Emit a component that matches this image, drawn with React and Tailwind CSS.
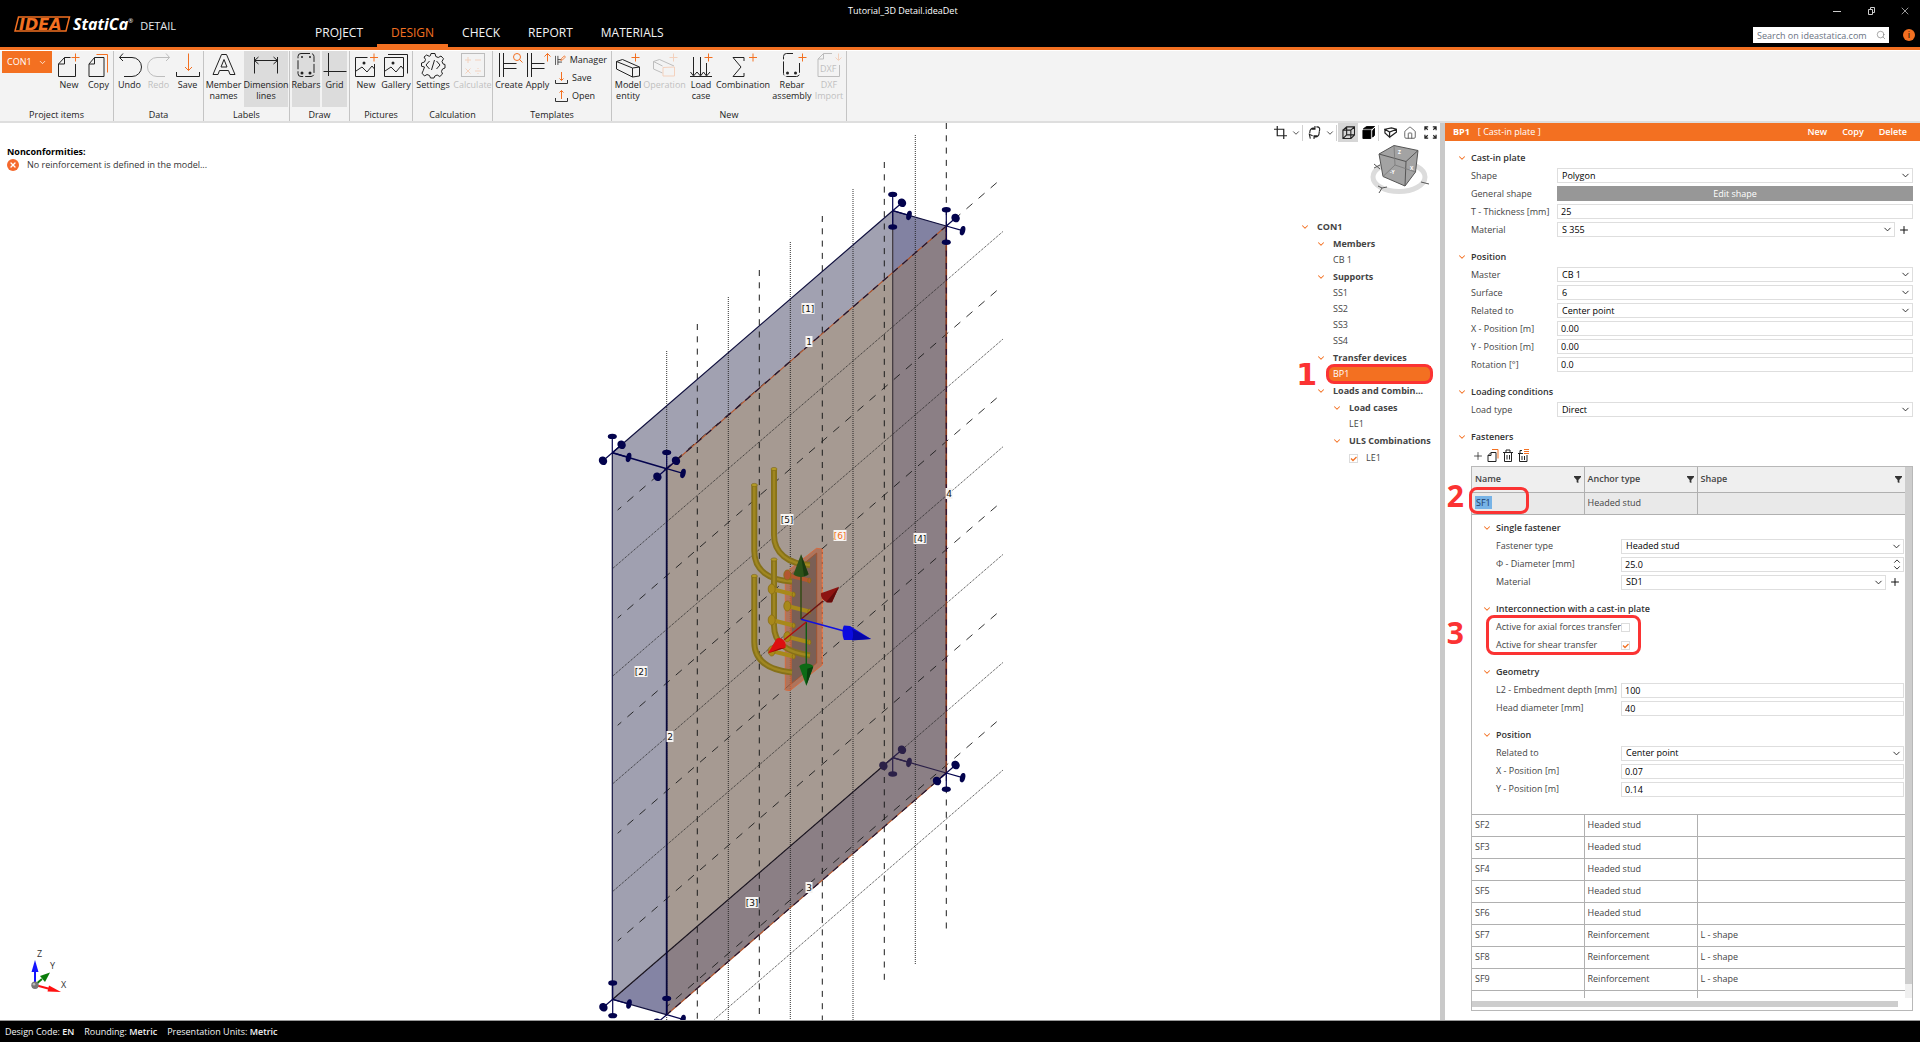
import { ChevronDown, House, Search, Plus, X } from "lucide-react";

const tabs = ["PROJECT", "DESIGN", "CHECK", "REPORT", "MATERIALS"];

/* ---------- ribbon icons ---------- */

const O = "#f37021";

const icons = {
  new: (
    <>
      <path d="M13.5 4.5H7.5L1.5 11v12.5h17V11M7.5 4.5V11h-6" />
      <path stroke={O} d="M18.5 .5v8M14.5 4.5h8" />
    </>
  ),
  copy: (
    <>
      <path d="M7.5 4.5h9.5v19h-15V11l5.5-6.5V11h-5.5" />
      <path stroke={O} d="M9.5 1.5h11v18" />
    </>
  ),
  undo: <path d="M5 .5L1.5 4.5 5 8M1.5 4.5H14a9.5 9.5 0 0 1 0 19H6" />,
  redo: <path d="M19 .5l3.5 4L19 8M22.5 4.5H10a9.5 9.5 0 0 0 0 19h8" />,
  save: (
    <>
      <path stroke={O} d="M12.5 .5v17M9 14l3.5 3.5L16 14" />
      <path d="M.5 19v4.5h23V19" />
    </>
  ),
  member: (
    <>
      <path d="M9.5 1.5h5L23 21.5h-5l-1.5-4h-9l-1.5 4H1z" />
      <path d="M12 6.5L9 14h6z" />
    </>
  ),
  dimension: <path d="M.5 4v16.500M23.500 4v16.500M.5 7.500h23M4.500 4l-4 3.500 4 3.500M19.500 4l4 3.500-4 3.500" />,
  rebars: (
    <>
      <rect x="4" y=".5" width="16" height="23" rx="3" strokeDasharray="9 2" />
      <g fill="currentColor" stroke="none">
        <circle cx="8" cy="4" r="1" />
        <circle cx="16" cy="4" r="1" />
        <circle cx="8" cy="20" r="1.5" />
        <circle cx="16" cy="20" r="1.5" />
      </g>
    </>
  ),
  grid: <path d="M5.5 0v23M.5 18.5h23" />,
  picture: (
    <>
      <path d="M13.5 4.5h-12v19h19V11M2 18l6-4 5 5 5-6 2.5 3" />
      <circle cx="10" cy="10" r="1.5" fill="currentColor" stroke="none" />
      <path stroke={O} d="M20 .5v8M16 4.5h8" />
    </>
  ),
  gallery: (
    <>
      <path d="M.5 4.5h19v19H.5zM1 18l6-4 5 5 5-6 2.5 3M4 1.5h19.5v19" />
      <circle cx="9" cy="10" r="1.5" fill="currentColor" stroke="none" />
    </>
  ),
  settings: (
    <>
      <path d="M10 .5h4l.8 3 2.4 1 2.8-1.5 2.5 2.700-1.5 2.800 1 2.400 2 .6v3.500l-2.500 1-1 2.400 1 2.600-2.700 2.500-2.600-1.500-2.400 1-.8 2h-3.500l-1-2.500-2.500-1-2.500 1.500-2.500-2.800 1.200-2.500L3.500 14l-3-.8V10l3-1L4.500 6.500 3 4l2.600-2 2.700 1.300 1-.5z" />
      <path d="M8.5 8l-3.5 4 3.5 4M15.5 8l3.5 4-3.5 4M13.500 7l-3 10" />
    </>
  ),
  calculate: (
    <>
      <rect x=".5" y=".5" width="23" height="23" />
      <path stroke={O} d="M7 4v6M4 7h6M14 7h6M4.5 15.5l5 5M9.5 15.5l-5 5M14 18h6M17 15v1M17 20v1" />
    </>
  ),
  create: (
    <>
      <path d="M2.5 0v24M6.5 0v24M6.5 10.5h13M6.5 15.5h13" />
      <circle cx="20" cy="4" r="3.5" stroke={O} />
      <path stroke={O} d="M22.5 6.5l3 3" />
    </>
  ),
  apply: (
    <>
      <path d="M1.5 0v24M5.5 0v24M5.5 10.5h13M5.5 15.5h13" />
      <path stroke={O} d="M21.5 8.5V.5M18.5 3.5l3-3 3 3" />
    </>
  ),
  model: (
    <>
      <path d="M.5 8.5l6-2 17 7.500v9l-7 1L.5 16zM.5 8.500L16.500 15l7-1M16.500 15v9" />
      <path stroke={O} d="M19.5 .5v8M15.5 4.5h8" />
    </>
  ),
  operation: (
    <>
      <path d="M9.5 20L.5 16V8.500l6-2 14.500 6.500M.5 8.500L9.500 13" />
      <path stroke={O} d="M10 14.5l11.500-.5v9H10zM20.500 .5v8M16.500 4.500h8" />
    </>
  ),
  load: (
    <>
      <path d="M4.5 4v18M11.5 4v18M17.5 10v12M1.5 19l3 4 3.500-4 3.500 4 3-4 3 4 3.500-4M1 23.500h22" />
      <path stroke={O} d="M19.5 .5v8M15.5 4.5h8" />
    </>
  ),
  combination: (
    <>
      <path d="M13 8V4.5H2l8 9.500-8 9.500h11V20" />
      <path stroke={O} d="M22 .5v8M18 4.5h8" />
    </>
  ),
  assembly: (
    <>
      <path d="M13 .5H6.5a3 3 0 0 0-3 3v17a3 3 0 0 0 3 3h10a3 3 0 0 0 3-3V10" strokeDasharray="14 2" />
      <circle cx="7.5" cy="20" r="1.5" fill="currentColor" stroke="none" />
      <circle cx="15.5" cy="20" r="1.5" fill="currentColor" stroke="none" />
      <path stroke={O} d="M22.5 .5v8M18.5 4.5h8" />
    </>
  ),
  dxf: (
    <>
      <path d="M15 .5H6.5L1 6v17.5h21.5V12M6.5 .5V6H1" />
      <path stroke={O} d="M21.5 .5V7M18.5 4.5l3 3 3-3" />
      <text x="3" y="19" fontSize="9" fill="currentColor" stroke="none" fontFamily="Open Sans, sans-serif">DXF</text>
    </>
  ),
};

const Icon = ({ name }) => (
  <svg
    viewBox="0 0 24 24"
    className="w-6 h-6 overflow-visible shrink-0"
    fill="none"
    stroke="currentColor"
    strokeWidth="1"
  >
    {icons[name]}
  </svg>
);

const Tool = ({ icon, label, className, active, disabled }) => (
  <button
    disabled={disabled}
    className={`h-[56px] pt-[2px] flex flex-col items-center gap-[2px] text-center leading-[11px] ${className} ${
      active ? "bg-[#dcdcdc]" : ""
    } ${disabled ? "opacity-25" : ""}`}
  >
    <Icon name={icon} />
    <span className="whitespace-pre">{label}</span>
  </button>
);

const Group = ({ title, className, children }) => (
  <section className="flex flex-col justify-between border-r border-[#c4c4c4]">
    <div className={`flex ${className}`}>{children}</div>
    <h2 className="text-center leading-[13px]">{title}</h2>
  </section>
);

const SmallTool = ({ label, children }) => (
  <button className="flex items-center gap-[4px] h-[18px]">
    <svg viewBox="0 0 13 12" className="w-[13px] h-3" fill="none" stroke="#333">
      {children}
    </svg>
    {label}
  </button>
);

const Ribbon = () => (
  <div className="h-[73px] shrink-0 flex bg-[#f3f3f3] border-t border-t-white border-b-2 border-b-[#dedede] text-[#222]">
    <Group title="Project items" className="pl-[2px]">
      <button className="w-[50px] h-[22px] mr-[2px] px-[5px] flex items-center justify-between bg-[#f37021] text-white">
        CON1 <ChevronDown size={9} strokeWidth={2} />
      </button>
      <Tool icon="new" label="New" className="w-[30px]" />
      <Tool icon="copy" label="Copy" className="w-[29px]" />
    </Group>
    <Group title="Data" className="px-px">
      <Tool icon="undo" label="Undo" className="w-[29px]" />
      <Tool icon="redo" label="Redo" className="w-[29px]" disabled />
      <Tool icon="save" label="Save" className="w-[29px]" />
    </Group>
    <Group title="Labels" className="px-px gap-[2px]">
      <Tool icon="member" label={"Member\nnames"} className="w-[37px]" />
      <Tool icon="dimension" label={"Dimension\nlines"} className="w-[44px]" active />
    </Group>
    <Group title="Draw" className="px-[2px] gap-[2px]">
      <Tool icon="rebars" label="Rebars" className="w-[28px]" active />
      <Tool icon="grid" label="Grid" className="w-[25px]" active />
    </Group>
    <Group title="Pictures" className="px-px">
      <Tool icon="picture" label="New" className="w-[30px]" />
      <Tool icon="gallery" label="Gallery" className="w-[30px]" />
    </Group>
    <Group title="Calculation" className="px-px gap-[2px]">
      <Tool icon="settings" label="Settings" className="w-[38px]" />
      <Tool icon="calculate" label="Calculate" className="w-[37px]" disabled />
    </Group>
    <Group title="Templates" className="pl-px pr-[4px]">
      <Tool icon="create" label="Create" className="w-[30px]" />
      <Tool icon="apply" label="Apply" className="w-[27px]" />
      <div className="flex flex-col w-[56px] pl-[4px]">
        <SmallTool label="Manager">
          <path d="M.5 1v11M3.5 1v11M3.5 5.5h4M3.5 8.5h5" />
          <path stroke={O} d="M7 6.5L8 4l3.500-3 1 1.500L9 6z" />
        </SmallTool>
        <SmallTool label="Save">
          <path stroke={O} d="M6.5 0v8.500M4.500 6.500l2 2 2-2" />
          <path d="M.5 8v3.500h12V8" />
        </SmallTool>
        <SmallTool label="Open">
          <path stroke={O} d="M6.5 9V.5M4.500 2.500l2-2 2 2" />
          <path d="M.5 8v3.500h12V8" />
        </SmallTool>
      </div>
    </Group>
    <Group title="New" className="pl-px pr-[2px]">
      <Tool icon="model" label={"Model\nentity"} className="w-[30px]" />
      <Tool icon="operation" label="Operation" className="w-[43px]" disabled />
      <Tool icon="load" label={"Load\ncase"} className="w-[30px]" />
      <Tool icon="combination" label="Combination" className="w-[54px]" />
      <Tool icon="assembly" label={"Rebar\nassembly"} className="w-[44px]" />
      <Tool icon="dxf" label={"DXF\nImport"} className="w-[30px]" disabled />
    </Group>
  </div>
);

/* ---------- header ---------- */

const Header = () => (
  <header className="h-[50px] shrink-0 grid grid-cols-[1fr_auto_1fr] bg-black border-b-[3px] border-[#f37021] text-white">
    <div className="flex">
      <div className="w-[301px] shrink-0 pl-[14px] flex items-center">
        <svg viewBox="0 0 57 16" className="w-[57px] h-4">
          <path d="M4.5 1h51l-3.5 14H1z" fill="none" stroke={O} strokeWidth="1.5" />
          <text
            x="5"
            y="13.5"
            fill={O}
            fontFamily="DejaVu Sans, sans-serif"
            fontWeight="bold"
            fontStyle="italic"
            fontSize="16"
          >
            IDEA
          </text>
        </svg>
        <span className="text-[16px] leading-5 font-bold italic ml-[2px]">StatiCa</span>
        <sup className="text-[6px]">®</sup>
        <span className="text-[11px] ml-[7px] mt-[4px] text-gray-200">DETAIL</span>
      </div>
      <nav className="flex items-end text-[12px]">
        {tabs.map((tab) => (
          <a
            key={tab}
            href="#"
            className={`px-[14px] h-[23px] leading-[18px] border-b-[3px] ${
              tab === "DESIGN" ? "text-[#f37021] border-[#f37021]" : "text-gray-100 border-transparent"
            }`}
          >
            {tab}
          </a>
        ))}
      </nav>
    </div>
    <h1 className="pt-1 leading-[13px] -ml-[112px]">Tutorial_3D Detail.ideaDet</h1>
    <div className="flex flex-col items-end justify-between pb-1">
      <div className="flex gap-[22px] pt-[5px] pr-[9px]">
        <button aria-label="Minimize">
          <svg viewBox="0 0 12 12" className="w-3 h-3" stroke="#ccc">
            <path d="M2 6.5h8" />
          </svg>
        </button>
        <button aria-label="Restore">
          <svg viewBox="0 0 12 12" className="w-3 h-3" stroke="#ccc" fill="none">
            <path d="M3.5 4.5h4v5h-4zM5.5 4V2.500h4v5H8" />
          </svg>
        </button>
        <button aria-label="Close">
          <X size={12} strokeWidth={1.5} color="#ccc" />
        </button>
      </div>
      <div className="flex items-center gap-[14px] pr-[5px]">
        <div className="relative w-[136px]">
          <input
            aria-label="Search"
            placeholder="Search on ideastatica.com"
            className="w-full h-4 px-1 bg-white text-[9px] text-black placeholder:text-gray-500 block"
          />
          <Search size={10} strokeWidth={1.5} color="#777" className="absolute right-[3px] top-[3px]" />
        </div>
        <button className="w-3 h-3 rounded-full bg-[#f37021] text-black text-[9px] leading-3">i</button>
      </div>
    </div>
  </header>
);

/* ---------- 3D scene ---------- */

// [x, top, bottom] of vertical grid lines
const dashedV = [
  [697.3, 324, 1020],
  [759.3, 270, 1020],
  [822.3, 216, 1020],
  [884.3, 162, 985],
  [946.3, 123, 932],
];
const dottedV = [
  [666.7, 351, 1020],
  [728.3, 297, 1020],
  [790.3, 242, 1020],
  [853, 189, 1020],
  [915.3, 135, 964],
];
const dashedD = [182.7, 290.7, 398, 506, 613.7];
const dottedD = [231.7, 339.3, 447, 554.7, 662.7];

const labels = [
  ["[1]", 808, 309],
  ["1", 809, 342],
  ["[5]", 787, 520],
  ["[6]", 840, 536],
  ["[4]", 920, 539],
  ["4", 949, 494],
  ["[2]", 641, 672],
  ["2", 670, 737],
  ["[3]", 752, 903],
  ["3", 809, 888],
];

// which arms each corner support has: u(p) d(own) n(orth-east) s(outh-west) r(ight)
const supports = [
  [612.3, 452.7, "unsr"],
  [666.7, 468.7, "unsr"],
  [892.7, 210.7, "udnr"],
  [946.3, 226, "udnr"],
  [612.7, 999.3, "udsr"],
  [666.7, 1014.7, "usr"],
  [892.7, 757.7, "dnsr", "#2b2048"],
  [946.3, 773, "dnsr"],
];

const arms = {
  u: [0, -16.3, 4.5, 2.7, 0],
  d: [0, 16.3, 4.5, 2.7, 0],
  n: [9.3, -8, 4, 4.5, -40],
  s: [-9.3, 8, 4, 4.5, -40],
  r: [16.3, 4.7, 2.6, 4.8, 14],
};

const Support = ({ x, y, dirs, color = "#03034d" }) => (
  <g transform={`translate(${x} ${y})`} fill={color} stroke={color}>
    {dirs.split("").map((d) => {
      const [dx, dy, rx, ry, rot] = arms[d];
      return (
        <g key={d}>
          <path d={`M0 0L${dx} ${dy}`} strokeWidth="1.2" />
          <ellipse cx={dx} cy={dy} rx={rx} ry={ry} stroke="none" transform={`rotate(${rot} ${dx} ${dy})`} />
        </g>
      );
    })}
  </g>
);

const Tube = ({ d }) => (
  <g fill="none">
    <path d={d} stroke="#86711a" strokeWidth="6" />
    <path d={d} stroke="#a08720" strokeWidth="2.5" />
  </g>
);

const Stud = ({ x, y, color = "#a8891a" }) => (
  <g stroke={color} fill={color}>
    <path d={`M${x} ${y}l22 5.500`} strokeWidth="4" />
    <ellipse cx={x} cy={y} rx="3.5" ry="5" stroke="#8a6d12" strokeWidth=".8" />
    <ellipse cx={x + 22} cy={y + 5.5} rx="1.5" ry="2.5" stroke="#8a6d12" strokeWidth=".8" />
  </g>
);

const Scene = () => (
  <svg
    viewBox="0 123 1440 897"
    preserveAspectRatio="xMidYMid slice"
    className="absolute inset-0 w-full h-full"
    fontFamily="DejaVu Sans, sans-serif"
  >
    {/* wall faces */}
    <path d="M612.3 452.7L892.7 210.7 946.3 226 666.7 468.7z" fill="#a1a1b1" />
    <path d="M892.7 210.7L946.3 226 892.7 272.7z" fill="#8282a2" />
    <path d="M612.3 452.7l54.400 16v546l-54-15.400z" fill="#a0a0b0" />
    <path d="M612.7 999.3l54-46.600v62z" fill="#8484a4" />
    <path d="M666.7 468.7L946.3 226v547L666.7 1014.7z" fill="#a69a92" />
    <path d="M892.7 272.7L946.3 226v547L666.7 1014.7v-62l226-195z" fill="#8b7f85" />

    {/* grid */}
    <g stroke="#1c1c1c" fill="none">
      {dashedV.map(([x, a, b]) => (
        <path key={x} d={`M${x} ${a}V${b}`} strokeDasharray="6 6.3" strokeWidth="1" />
      ))}
      {dottedV.map(([x, a, b]) => (
        <path key={x} d={`M${x} ${a}V${b}`} strokeDasharray="1 1" strokeWidth=".9" />
      ))}
      {dashedD.map((y) => (
        <path key={y} d={`M996.7 ${y}l-379 327.3`} strokeDasharray="8 8" strokeWidth=".9" />
      ))}
      <path d="M996.7 721.7L666.7 1006.7" strokeDasharray="8 8" strokeWidth=".9" />
      {dottedD.map((y) => (
        <path key={y} d={`M1002.7 ${y}l-390.4 337.1`} strokeDasharray="1 1" strokeWidth=".9" />
      ))}
      <path d="M1002.7 770.3l-289 249.7" strokeDasharray="1 1" strokeWidth=".9" />
    </g>

    {/* edges */}
    <g fill="none" strokeWidth="1.2">
      <path d="M612.3 452.7L892.7 210.7l53.600 15.300M612.3 452.7v546.600l54 15.400" stroke="#11113f" />
      <path d="M612.7 999.3L892.7 757.7" stroke="#1d1722" />
      <path d="M892.7 210.7v547" stroke="#3d363b" />
      <path d="M892.7 757.7l53.6 15.3" stroke="#2b2048" />
      <path d="M666.7 468.7v546" stroke="#07073a" strokeWidth="1.8" />
      <path d="M666.7 468.7L946.3 226M946.3 773L666.7 1014.7" stroke="#b3572f" />
      <path d="M666.7 468.7L946.3 226M946.3 773L666.7 1014.7" stroke="#1a1433" strokeDasharray="7 6" />
      <path d="M946.3 226v547" stroke="#8c3c20" strokeWidth="1.6" />
      <path d="M946.3 226v547" stroke="#2a1030" strokeDasharray="6 6.3" />
      <path d="M612.3 452.7l54.400 16" stroke="#03034d" strokeWidth="1.6" />
    </g>

    {supports.map(([x, y, dirs, color]) => (
      <Support key={`${x}${y}`} x={x} y={y} dirs={dirs} color={color} />
    ))}

    {/* cast-in plate */}
    <g stroke="#d9683a" strokeWidth=".9">
      <path d="M785.3 572.7l31.300-24.400 5.700.7v116l-32.300 25.600-4.700-.6z" fill="#b0674a" fillOpacity=".75" />
      <path d="M791 574l25.7-21v110L791 684z" fill="#7a5f55" stroke="#a3522f" />
      <path d="M785.3 572.7l5.7 1.300v115.500" fill="none" />
    </g>
    <path d="M822.3 549v116" stroke="#f0804e" strokeDasharray="3 2" />

    {/* anchors */}
    <Tube d="M774 469v66c0 18 14 29 36 30" />
    <Tube d="M754.3 485v66c0 19 14 29 37.700 30.500" />
    <Tube d="M774 559.5v66c0 19 14 27 36 30" />
    <Tube d="M754.3 576v66c0 19 14 28 37.700 30.500" />
    <g fill="#b39a26" stroke="#7b6514" strokeWidth=".6">
      <ellipse cx="774" cy="469" rx="3" ry="1.6" />
      <ellipse cx="754.3" cy="485" rx="3" ry="1.6" />
      <ellipse cx="774" cy="559.5" rx="3" ry="1.6" />
      <ellipse cx="754.3" cy="576" rx="3" ry="1.6" />
    </g>
    <Stud x={787.3} y={575} color="#b3572f" />
    <Stud x={771.7} y={589} />
    <Stud x={787.3} y={606} />
    <Stud x={771.7} y={620} />
    <Stud x={787.3} y={636.7} />
    <Stud x={771.7} y={651} />

    {/* local axes */}
    <g fill="none" strokeWidth="1.4">
      <path d="M801 619.3V574" stroke="#2f4a12" />
      <path d="M806.3 622v46" stroke="#0c5c14" />
      <path d="M806.3 622L784 640" stroke="#b00d0d" />
      <path d="M801 619.3l22-18.300" stroke="#6e1210" />
      <path d="M801 619.3l44 12" stroke="#1010e0" />
    </g>
    <path d="M801 554.3l7.500 20c-3 3.500-12 3.500-15 0z" fill="#2d5219" />
    <path d="M801 554.3l3 22 4.500-2z" fill="#1b3b10" />
    <path d="M806.3 685.7l-7-19.500c3-3.500 11-3.500 14 0z" fill="#0d6a15" />
    <path d="M806.3 685.7l1-17 6-2z" fill="#07400c" />
    <path d="M768 653.3l8.500-14.500c4-3 10.500 2 9 9z" fill="#dd0f0f" />
    <path d="M768 653.3l12-5 5.500-.5z" fill="#8a0808" />
    <path d="M839 586.7l-18 6.500c-1 5 5 11 11 9z" fill="#8e1411" />
    <path d="M839 586.7l-13 15.500 6 0z" fill="#640b0a" />
    <path d="M871 639l-21-13-6-.5c-2 3-2 10 0 14.500h8z" fill="#0b0be0" />
    <path d="M871 639l-19-10c1.500 3 1.500 8 0 11.500z" fill="#0505a8" />

    {labels.map(([text, x, y]) => {
      const w = text.length > 1 ? 13 : 7;
      return (
        <g key={text}>
          <rect x={x - w / 2} y={y - 6} width={w} height="11" fill="#f6f4f2" />
          <text x={x} y={y + 3} textAnchor="middle" fontSize="9" fill={text === "[6]" ? O : "#111"}>
            {text}
          </text>
        </g>
      );
    })}

    {/* global axes */}
    <path d="M35 985v-17" stroke="#1414ff" strokeWidth="2" />
    <path d="M35 960l3.5 12h-7z" fill="#1414ff" />
    <path d="M35 985l7-6" stroke="#0a7d0a" strokeWidth="2" />
    <path d="M50 972.5l-10 3.500 5 6z" fill="#0a7d0a" />
    <path d="M35 985l15 4" stroke="#f11" strokeWidth="2" />
    <path d="M61 992l-13.5-.5 1.500-6z" fill="#f11" />
    <circle cx="35" cy="985.3" r="3.7" fill="#777" />
    <circle cx="34" cy="984.3" r="1.3" fill="#bbb" />
    <g fontSize="9" fill="#333" fontFamily="Open Sans, sans-serif" textAnchor="middle">
      <text x="39.5" y="957">Z</text>
      <text x="52.5" y="969">Y</text>
      <text x="63.5" y="988">X</text>
    </g>
  </svg>
);

const NavCube = () => (
  <svg viewBox="0 0 62 52" className="w-[62px] h-[52px]" fill="none">
    <ellipse cx="31" cy="33" rx="26" ry="14.5" stroke="#dcdcdc" strokeWidth="5" />
    <path d="M11 10L26 1.5 50 6.5 47.5 28 37 42 15 32.5z" fill="#a3a3a3" stroke="#555" />
    <path d="M11 10l27 7.5L50 6.5M38 17.5L37 42" stroke="#555" />
    <path d="M26 1.5l1 19.5L15 32.5M27 21l20.5 7" stroke="#777" strokeWidth=".8" />
    <path d="M6 20l6 5M6 24l6-3M10 42l4 2 5-1M14 44l-3 5M53 38l8 2" stroke="#555" />
    <g fontSize="5" fill="#fff" fontFamily="Open Sans, sans-serif" fontWeight="bold">
      <text x="22" y="30">-Y</text>
      <text x="30" y="10">Z</text>
      <text x="42" y="26">X</text>
    </g>
  </svg>
);

const ViewButton = ({ label, active, children }) => (
  <button aria-label={label} className={`w-5 h-[19px] flex items-center justify-center ${active ? "bg-[#d6d6d6]" : ""}`}>
    <svg viewBox="0 0 14 14" className="w-[13px] h-[13px]" fill="none" stroke="#222">
      {children}
    </svg>
  </button>
);

const Divider = () => <span className="w-px h-4 bg-[#d0d0d0] mr-[1px]" />;

const ViewToolbar = () => (
  <div className="flex items-center text-[#333]">
    <ViewButton label="Clip">
      <path d="M3.5 0v10.500H14M0 3.500h10.500V14" strokeWidth="1.3" />
    </ViewButton>
    <ChevronDown size={10} className="mx-[1px]" />
    <Divider />
    <ViewButton label="Rotate">
      <path
        d="M2 8C1.500 4 4 1.500 7 2.500M7.500 0v3.500H4M2.500 13.500L1.500 9 5 10.500M12 6c.5 4-2 6.500-5 5.500M6.500 14v-3.500H10M9 1c3-.5 4.500 1.500 3 5"
        strokeWidth="1.2"
      />
    </ViewButton>
    <ChevronDown size={10} className="mx-px" />
    <Divider />
    <ViewButton label="Wireframe" active>
      <path d="M1 4.5h8.500v9H1zM1 4.500L5 1h8.500L9.500 4.500M13.500 1v8.500l-4 4M5 1v8.500h8.500M5 9.500l-4 4" strokeWidth="1.2" />
    </ViewButton>
    <ViewButton label="Solid">
      <path d="M1 4.5h8.500v9H1z" fill="#000" stroke="#000" />
      <path d="M1.5 3L5 .5h8.500l-3 2.500zM11.500 5l2-2.500v7.500L11.500 12z" fill="#000" stroke="#000" />
    </ViewButton>
    <Divider />
    <ViewButton label="Section">
      <path d="M1 3.5L8 2l5.500 1.500-7.500 3zM1 3.500v4l5 4.500V6.500M13.500 3.500v3L6 12" strokeWidth="1.3" />
    </ViewButton>
    <button aria-label="Home" className="w-5 flex justify-center">
      <House size={14} strokeWidth={1.5} color="#555" />
    </button>
    <ViewButton label="Fit">
      <path
        d="M4.5 1H1v3.500M1 1l3 3M9.500 1H13v3.500M13 1l-3 3M4.500 13H1V9.500M1 13l3-3M9.500 13H13V9.500M13 13l-3-3"
        strokeWidth="1.3"
      />
    </ViewButton>
  </div>
);

/* ---------- shared controls ---------- */

const Tick = ({ label, id, defaultChecked }) => (
  <span className="relative w-[9px] h-[9px] shrink-0">
    <input
      id={id}
      type="checkbox"
      aria-label={label}
      defaultChecked={defaultChecked}
      className="peer appearance-none block w-[9px] h-[9px] bg-white border border-[#dcdcdc]"
    />
    <svg
      viewBox="0 0 9 9"
      className="absolute inset-0 w-[9px] h-[9px] hidden peer-checked:block pointer-events-none"
      fill="none"
      stroke={O}
      strokeWidth="1.3"
    >
      <path d="M2 4.5L4 6.5 7.5 3" />
    </svg>
  </span>
);

const Fold = () => <ChevronDown size={10} strokeWidth={2.5} color={O} className="shrink-0" />;

const Mark = ({ className, children }) => (
  <span className={`absolute right-full text-[30px] leading-[30px] font-bold text-[#fb3333] ${className}`}>
    {children}
  </span>
);

const indent = ["pl-0", "pl-4", "pl-8"];

const TreeHead = ({ level, children }) => (
  <li className={`h-[17px] flex items-center gap-[7px] font-bold whitespace-nowrap ${indent[level]}`}>
    <Fold />
    {children}
  </li>
);

const TreeItem = ({ level, children }) => (
  <li className={`h-4 flex items-center ${indent[level]}`}>
    <span className="pl-[17px]">{children}</span>
  </li>
);

const Tree = () => (
  <ul className="w-[131px] text-[#444]">
    <TreeHead level={0}>CON1</TreeHead>
    <TreeHead level={1}>Members</TreeHead>
    <TreeItem level={1}>CB 1</TreeItem>
    <TreeHead level={1}>Supports</TreeHead>
    {["SS1", "SS2", "SS3", "SS4"].map((s) => (
      <TreeItem key={s} level={1}>
        {s}
      </TreeItem>
    ))}
    <TreeHead level={1}>Transfer devices</TreeHead>
    <li className="relative h-4 ml-[29px] pl-1 flex items-center bg-[#f37021] text-white">
      BP1
      <span className="absolute -inset-y-[2px] -left-[3px] -right-[2px] border-[3px] border-[#fb3333] rounded-[8px]" />
      <Mark className="mr-3 top-[-6px] font-['DejaVu_Sans']">1</Mark>
    </li>
    <TreeHead level={1}>Loads and Combin...</TreeHead>
    <TreeHead level={2}>Load cases</TreeHead>
    <TreeItem level={2}>LE1</TreeItem>
    <TreeHead level={2}>ULS Combinations</TreeHead>
    <li className="h-[18px] flex items-center gap-[8px] pl-[49px]">
      <Tick id="uls-le1" defaultChecked />
      <label htmlFor="uls-le1">LE1</label>
    </li>
  </ul>
);

const Viewport = () => (
  <main className="relative flex-1 min-w-0 flex justify-between overflow-hidden bg-white">
    <Scene />
    <div className="relative pl-[7px] pt-[22px] text-[#333]">
      <h2 className="font-bold text-black leading-[13px]">Nonconformities:</h2>
      <p className="flex items-center gap-2 h-[14px]">
        <span className="w-3 h-3 rounded-full bg-[#f5692e] flex items-center justify-center">
          <X size={8} strokeWidth={4} color="#fff" />
        </span>
        No reinforcement is defined in the model...
      </p>
    </div>
    <div className="relative flex flex-col items-end">
      <ViewToolbar />
      <div className="pr-[10px] pt-[2px]">
        <NavCube />
      </div>
      <div className="pr-[9px] pt-[22px]">
        <Tree />
      </div>
    </div>
  </main>
);

/* ---------- properties panel ---------- */

const fieldBox = "w-full h-[15px] block bg-white border border-[#dedede] text-black";

const Row = ({ id, label, wide, children }) => (
  <div className="flex items-center h-[15px]">
    <label htmlFor={id} className={`shrink-0 whitespace-nowrap ${wide ? "w-[125px]" : "w-[86px]"}`}>
      {label}
    </label>
    {children}
  </div>
);

const Text = ({ id, label, value, wide }) => (
  <Row id={id} label={label} wide={wide}>
    <input id={id} defaultValue={value} className={`${fieldBox} px-[3px]`} />
  </Row>
);

const Select = ({ id, label, value, wide, addable }) => (
  <Row id={id} label={label} wide={wide}>
    <div className="relative flex-1">
      <select id={id} className={`${fieldBox} appearance-none px-1`}>
        <option>{value}</option>
      </select>
      <ChevronDown size={11} className="absolute right-[2px] top-[2px] pointer-events-none" color="#222" />
    </div>
    {addable && (
      <button aria-label="Add material" className="w-[18px] flex justify-center">
        <Plus size={12} color="#111" />
      </button>
    )}
  </Row>
);

const Section = ({ title, children }) => (
  <section className="mb-3 flex flex-col gap-[3px]">
    <h3 className="h-[15px] flex items-center gap-[4px] font-semibold text-[#333]">
      <Fold />
      {title}
    </h3>
    {children && <div className="pl-[14px] flex flex-col gap-[3px]">{children}</div>}
  </section>
);

const Funnel = () => (
  <svg viewBox="0 0 8 8" className="w-[7px] h-[7px] shrink-0">
    <path d="M0 0h8v1L5 4.5V8L3 7V4.5L0 1z" fill="#333" />
  </svg>
);

const fasteners = [
  ["SF2", "Headed stud", ""],
  ["SF3", "Headed stud", ""],
  ["SF4", "Headed stud", ""],
  ["SF5", "Headed stud", ""],
  ["SF6", "Headed stud", ""],
  ["SF7", "Reinforcement", "L - shape"],
  ["SF8", "Reinforcement", "L - shape"],
  ["SF9", "Reinforcement", "L - shape"],
  ["", "", ""],
];

const FastenerDetail = () => (
  <div className="pt-[6px] pl-[10px] pr-px pb-[5px]">
    <Section title="Single fastener">
      <Select id="f-type" label="Fastener type" value="Headed stud" wide />
      <Row id="f-dia" label="Φ - Diameter [mm]" wide>
        <div className="relative flex-1">
          <input id="f-dia" defaultValue="25.0" className={`${fieldBox} px-[3px]`} />
          <svg viewBox="0 0 8 12" className="absolute right-[3px] top-[2px] w-2 h-[11px]" fill="none" stroke="#222">
            <path d="M1 4l3-3 3 3M1 8l3 3 3-3" />
          </svg>
        </div>
      </Row>
      <Select id="f-mat" label="Material" value="SD1" wide addable />
    </Section>
    <Section title="Interconnection with a cast-in plate">
      <Row id="f-axial" label="Active for axial forces transfer" wide>
        <Tick id="f-axial" />
      </Row>
      <Row id="f-shear" label="Active for shear transfer" wide>
        <Tick id="f-shear" defaultChecked />
      </Row>
    </Section>
    <Section title="Geometry">
      <Text id="f-l2" label="L2 - Embedment depth [mm]" value="100" wide />
      <Text id="f-head" label="Head diameter [mm]" value="40" wide />
    </Section>
    <Section title="Position">
      <Select id="f-rel" label="Related to" value="Center point" wide />
      <Text id="f-x" label="X - Position [m]" value="0.07" wide />
      <Text id="f-y" label="Y - Position [m]" value="0.14" wide />
    </Section>
  </div>
);

const FastenerTable = () => (
  <div className="relative flex-1 min-h-0 ml-[14px] mb-[9px] flex flex-col border border-[#b8b8b8]">
    <div className="flex-1 min-h-0 flex">
      <div className="flex-1 overflow-hidden">
        <table className="w-full table-fixed border-collapse text-left">
          <colgroup>
            <col className="w-[112px]" />
            <col className="w-[113px]" />
            <col />
          </colgroup>
          <thead>
            <tr className="h-[25px] bg-[#efefef]">
              {["Name", "Anchor type", "Shape"].map((h) => (
                <th key={h} className="px-[3px] border-r border-b border-[#b0b0b0] last:border-r-0 font-semibold">
                  <div className="flex items-center justify-between pr-1 last:pr-0">
                    {h}
                    <Funnel />
                  </div>
                </th>
              ))}
            </tr>
          </thead>
          <tbody>
            <tr className="h-[22px] bg-[#e9e9e9]">
              <td className="px-[3px] border-r border-b border-[#b0b0b0]">
                <span className="bg-[#77b3e6] text-[#1b3a66] px-px">SF1</span>
              </td>
              <td className="px-[3px] border-r border-b border-[#b0b0b0]">Headed stud</td>
              <td className="border-b border-[#b0b0b0]"></td>
            </tr>
            <tr>
              <td colSpan={3} className="border-b border-[#b0b0b0]">
                <FastenerDetail />
              </td>
            </tr>
            {fasteners.map(([name, type, shape], i) => (
              <tr key={i} className="h-[22px]">
                <td className="px-[3px] border-r border-b border-[#b0b0b0]">{name}</td>
                <td className="px-[3px] border-r border-b border-[#b0b0b0]">{type}</td>
                <td className="px-[3px] border-b border-[#b0b0b0]">{shape}</td>
              </tr>
            ))}
          </tbody>
        </table>
      </div>
      <div className="w-[7px] bg-[#f0f0f0] pb-[14px]">
        <div className="h-full bg-[#cdcdcd]" />
      </div>
    </div>
    <div className="h-3 pt-[3px] pr-[14px] bg-white">
      <div className="h-[6px] bg-[#cdcdcd]" />
    </div>

    {/* step marks */}
    <span className="absolute -left-[3px] top-[20px] w-[60px] h-[27px] border-[3px] border-[#fb3333] rounded-[8px]" />
    <Mark className="mr-[8px] top-[14px]">2</Mark>
    <span className="absolute left-[14px] top-[148px] w-[155px] h-[40px] border-[3px] border-[#fb3333] rounded-[8px]" />
    <Mark className="mr-[8px] top-[151px]">3</Mark>
  </div>
);

const FastenerTools = () => (
  <div className="h-[15px] mb-[3px] pl-[15px] flex items-center gap-[3px] -mt-[8px]">
    <button aria-label="Add fastener">
      <Plus size={12} strokeWidth={1.5} color="#222" />
    </button>
    <button aria-label="Copy fastener">
      <svg viewBox="0 0 12 13" className="w-3 h-[13px]" fill="none" stroke="#222">
        <path d="M4 3.5h5v9H1V6.500l3-3v3H1" />
        <path stroke={O} d="M5 .5h6v9" />
      </svg>
    </button>
    <button aria-label="Delete fastener">
      <svg viewBox="0 0 12 13" className="w-3 h-[13px]" fill="none" stroke="#222">
        <path d="M1 3.5h10M4 3V1h4v2M2.5 4v8.500h7V4M5 6v4.500M7.500 6v4.500" />
      </svg>
    </button>
    <button aria-label="Delete all fasteners">
      <svg viewBox="0 0 12 13" className="w-3 h-[13px]" fill="none" stroke="#222">
        <path d="M1 4.5h5M3 4V1.500h2M2.500 5v7.500h7.500V6M5 7v4M7.500 7v4" />
        <path stroke={O} d="M7 .5h5M7 2.500h5M7 4.500h5" />
      </svg>
    </button>
  </div>
);

const Panel = () => (
  <aside className="w-[475px] shrink-0 flex flex-col bg-white text-[#444]">
    <div className="h-[18px] shrink-0 flex items-center pl-2 pr-[13px] bg-[#f37021] text-white">
      <span className="font-bold">BP1</span>
      <span className="ml-2 flex-1">[ Cast-in plate ]</span>
      <div className="flex gap-[15px] font-semibold">
        <button>New</button>
        <button>Copy</button>
        <button>Delete</button>
      </div>
    </div>
    <div className="flex-1 min-h-0 flex flex-col pt-[9px] pl-[12px] pr-[7px]">
      <Section title="Cast-in plate">
        <Select id="shape" label="Shape" value="Polygon" />
        <Row label="General shape">
          <button className="flex-1 h-[15px] bg-[#979797] text-white leading-[15px]">Edit shape</button>
        </Row>
        <Text id="thick" label="T - Thickness [mm]" value="25" />
        <Select id="mat" label="Material" value="S 355" addable />
      </Section>
      <Section title="Position">
        <Select id="master" label="Master" value="CB 1" />
        <Select id="surface" label="Surface" value="6" />
        <Select id="related" label="Related to" value="Center point" />
        <Text id="px" label="X - Position [m]" value="0.00" />
        <Text id="py" label="Y - Position [m]" value="0.00" />
        <Text id="rot" label="Rotation [°]" value="0.0" />
      </Section>
      <Section title="Loading conditions">
        <Select id="load" label="Load type" value="Direct" />
      </Section>
      <Section title="Fasteners" />
      <FastenerTools />
      <FastenerTable />
    </div>
  </aside>
);

const Footer = () => (
  <footer className="h-[22px] shrink-0 flex items-center gap-[10px] px-[5px] bg-black border-t border-[#9a9a9a] text-gray-100">
    <span>
      Design Code: <b className="font-semibold">EN</b>
    </span>
    <span>
      Rounding: <b className="font-semibold">Metric</b>
    </span>
    <span>
      Presentation Units: <b className="font-semibold">Metric</b>
    </span>
  </footer>
);

const App = () => {
  return (
    <div className="h-screen flex flex-col font-['Open_Sans',sans-serif] text-[9px] leading-[12px] bg-white">
      <Header />
      <Ribbon />
      <div className="flex-1 min-h-0 flex">
        <Viewport />
        <div className="w-[5px] shrink-0 bg-[#c9c9c9]" />
        <Panel />
      </div>
      <Footer />
    </div>
  );
};

export default App;
